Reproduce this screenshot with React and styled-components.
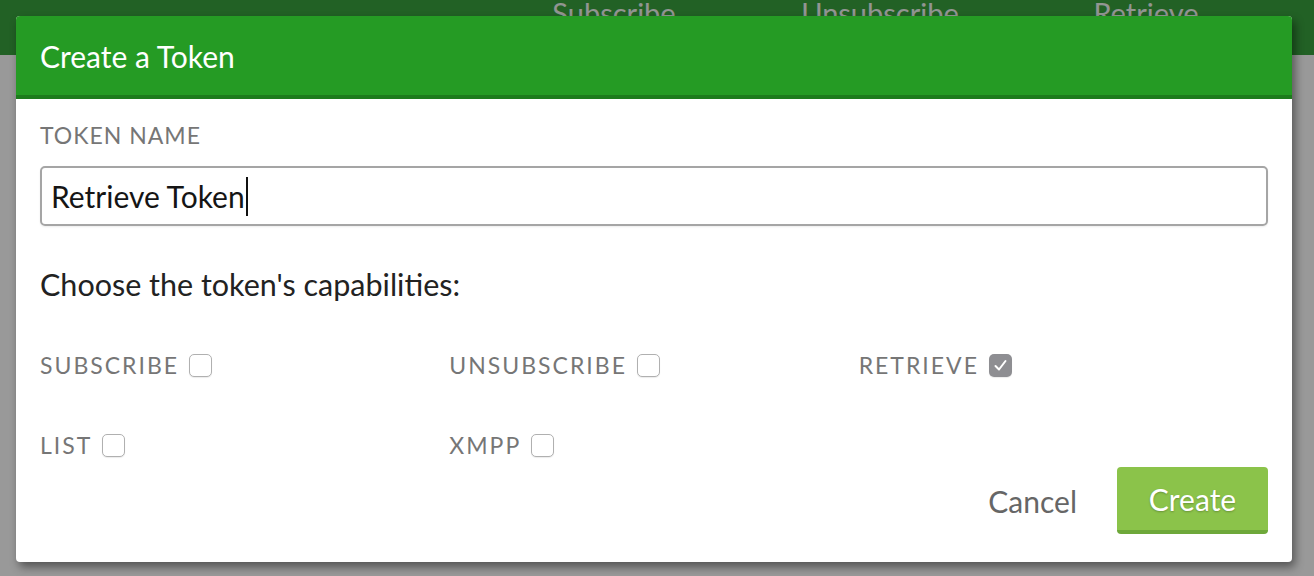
import React from 'react'
import styled, {createGlobalStyle} from 'styled-components'

const GlobalStyle = createGlobalStyle`
    html, body{
        margin: 0;
        padding: 0;
    }
    body{
        font-family: 'Lato', 'Noto Sans', sans-serif;
        background: #ffffff;
    }
`

const Page = styled.div`
    position: relative;
    width: 1314px;
    height: 576px;
    overflow: hidden;
    background: #ffffff;
`

const TopBar = styled.div`
    height: 55px;
    background: #3aa23f;
    display: flex;
    padding-left: 481px;
`

const NavItem = styled.div`
    width: 266px;
    text-align: center;
    color: #f4f8f4;
    font-size: 29px;
    line-height: 26px;
`

const Overlay = styled.div`
    position: absolute;
    inset: 0;
    background: rgba(0,0,0,0.4);
    padding: 16px;
`

const Modal = styled.div`
    width: 1276px;
    height: 546px;
    background: #ffffff;
    border-radius: 4px;
    box-shadow: 3px 5px 10px rgba(0,0,0,0.45);
    display: flex;
    flex-direction: column;
    overflow: hidden;
`

const Header = styled.div`
    height: 79px;
    background: #259b24;
    border-bottom: 4px solid #1d7b1c;
    display: flex;
    align-items: center;
    padding: 0 24px;
    color: #ffffff;
    font-size: 30px;
`

const Body = styled.div`
    flex: 1;
    padding: 22px 24px 28px;
    display: flex;
    flex-direction: column;
`

const Label = styled.div`
    font-size: 23px;
    line-height: 29px;
    letter-spacing: ${p => p.spacing || 2}px;
    text-transform: uppercase;
    color: #767676;
`

const Field = styled.div`
    margin-top: 16px;
    height: 60px;
    box-sizing: border-box;
    border: 2px solid #a5a5a5;
    border-radius: 5px;
    box-shadow: 0 1px 2px rgba(0,0,0,0.08);
    padding-left: 9px;
    display: flex;
    align-items: center;
    font-size: 30px;
    color: #151515;
`

const Caret = styled.span`
    display: inline-block;
    width: 2px;
    height: 39px;
    background: #111111;
    margin-left: 1px;
`

const Heading = styled.div`
    margin-top: 40px;
    font-size: 30.5px;
    line-height: 36px;
    color: #222222;
`

const Options = styled.div`
    margin-top: 43px;
    display: grid;
    grid-template-columns: repeat(3, 1fr);
    row-gap: 40px;
`

const Option = styled.label`
    height: 40px;
    display: flex;
    align-items: center;
    gap: 10px;
`

const Box = styled.span`
    width: 23px;
    height: 23px;
    box-sizing: border-box;
    border-radius: 5px;
    border: ${p => p.checked ? 'none' : '1.5px solid #b0b0b0'};
    background: ${p => p.checked ? '#8e8e92' : '#ffffff'};
    box-shadow: 0 1px 1px rgba(0,0,0,0.08);
    display: flex;
    align-items: center;
    justify-content: center;
`

const Footer = styled.div`
    margin-top: auto;
    display: flex;
    justify-content: flex-end;
    align-items: center;
    gap: 40px;
`

const CancelButton = styled.span`
    font-size: 30px;
    color: #666666;
    cursor: pointer;
`

const CreateButton = styled.button`
    width: 151px;
    height: 67px;
    box-sizing: border-box;
    border: none;
    border-bottom: 4px solid #6ea83a;
    border-radius: 4px;
    background: #8bc34a;
    color: #ffffff;
    font-family: 'Lato', 'Noto Sans', sans-serif;
    font-size: 30px;
    text-shadow: 0 1px 2px rgba(0,0,0,0.25);
    padding: 0;
    cursor: pointer;
`

const capabilities = [
    {name: 'Subscribe', checked: false},
    {name: 'Unsubscribe', checked: false},
    {name: 'Retrieve', checked: true},
    {name: 'List', checked: false},
    {name: 'XMPP', checked: false},
]

const App = () => {
    return (
        <Page>
            <GlobalStyle/>
            <TopBar>
                <NavItem>Subscribe</NavItem>
                <NavItem>Unsubscribe</NavItem>
                <NavItem>Retrieve</NavItem>
            </TopBar>

            <Overlay>
                <Modal>
                    <Header>Create a Token</Header>
                    <Body>
                        <Label spacing={1}>Token Name</Label>
                        <Field>Retrieve Token<Caret/></Field>

                        <Heading>Choose the token's capabilities:</Heading>

                        <Options>
                            {capabilities.map(c => (
                                <Option key={c.name}>
                                    <Label>{c.name}</Label>
                                    <Box checked={c.checked}>
                                        {c.checked &&
                                            <svg width='15' height='15' viewBox='0 0 15 15'>
                                                <path d='M2.5 8 L6 11.5 L12.5 3' fill='none' stroke='#fff' strokeWidth='2' strokeLinecap='round' strokeLinejoin='round'/>
                                            </svg>}
                                    </Box>
                                </Option>
                            ))}
                        </Options>

                        <Footer>
                            <CancelButton>Cancel</CancelButton>
                            <CreateButton>Create</CreateButton>
                        </Footer>
                    </Body>
                </Modal>
            </Overlay>
        </Page>
    )
}

export default App
